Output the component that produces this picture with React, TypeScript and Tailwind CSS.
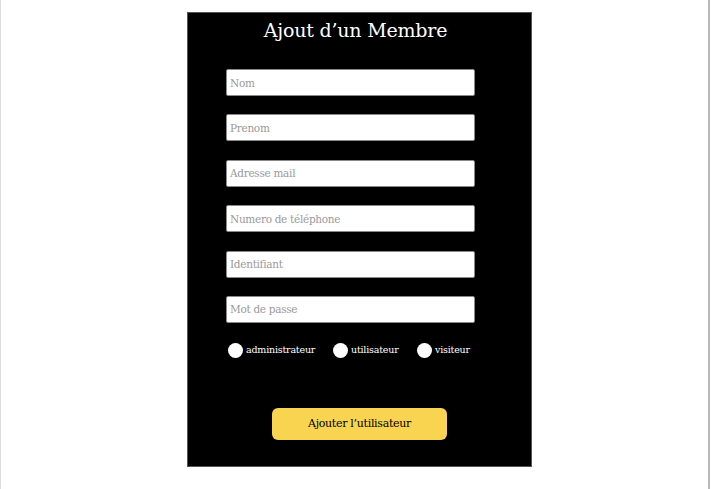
import React from "react";

const fields = [
  "Nom",
  "Prenom",
  "Adresse mail",
  "Numero de téléphone",
  "Identifiant",
  "Mot de passe",
];

const roles = [
  { label: "administrateur", w: "w-[105px]" },
  { label: "utilisateur", w: "w-[84px]" },
  { label: "visiteur", w: "w-[60px]" },
];

export default function App() {
  return (
    <div
      className="w-[711px] h-[489px] bg-white flex"
      style={{ fontFamily: '"DejaVu Serif", "Liberation Serif", serif' }}
    >
      <div className="w-[710px] h-[489px] border-l border-[#dcdcdc] border-r-2 border-r-[#bdb8b6] pt-[12px] pl-[186px]">
        <div className="w-[345px] h-[455px] bg-black border border-[#555] flex flex-col items-start">
          <h1 className="self-stretch text-center pr-[8px] text-white text-[19px] leading-[28px] mt-[3px] tracking-[-0.2px]">
            Ajout d’un Membre
          </h1>
          <div className="flex flex-col gap-[18.4px] mt-[25px] ml-[38px]">
            {fields.map((f) => (
              <input
                key={f}
                placeholder={f}
                className="w-[249px] h-[27px] bg-white rounded-[2px] border border-[#8a8a8a] px-[3px] text-[10.5px] text-black placeholder:text-[#9a9a9a] outline-none tracking-[-0.3px]"
              />
            ))}
          </div>
          <div className="flex items-center h-[15px] mt-[20px] ml-[40px]">
            {roles.map((r) => (
              <label key={r.label} className={`flex items-center gap-[3px] ${r.w}`}>
                <span className="w-[15px] h-[15px] rounded-full bg-white inline-block" />
                <span className="text-white text-[9.5px] tracking-[-0.2px]">{r.label}</span>
              </label>
            ))}
          </div>
          <button className="mt-[50px] ml-[84px] w-[175px] h-[32px] rounded-[6px] bg-[#f8d451] text-black text-[11px] tracking-[-0.3px]">
            Ajouter l’utilisateur
          </button>
        </div>
      </div>
    </div>
  );
}
